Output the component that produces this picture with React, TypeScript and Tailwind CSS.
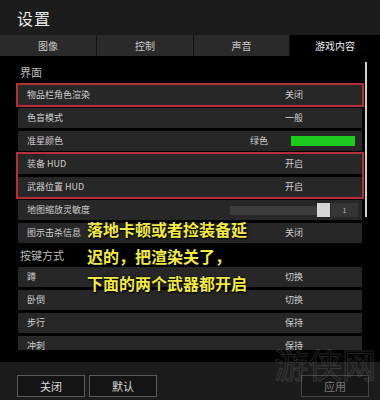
import React from 'react';

const font = { fontFamily: '"Noto Sans CJK SC", "Noto Sans", sans-serif' };

const tabs = ['图像', '控制', '声音', '游戏内容'];

const keyRows = [
  { label: '蹲', value: '切换' },
  { label: '卧倒', value: '切换' },
  { label: '步行', value: '保持' },
  { label: '冲刺', value: '保持' },
];

type RowProps = { label: string; value?: string; children?: React.ReactNode; boxed?: boolean };

const Row: React.FC<RowProps> = ({ label, value, children, boxed }) => (
  <div
    className={`h-[20px] shrink-0 bg-[#272727] flex items-center pl-[9px] text-[9px] text-[#cfcfcf] ${
      boxed ? 'outline-2 outline-[#b3303a]' : ''
    }`}
  >
    {children ? (
      <>
        <span className="flex-1">{label}</span>
        {children}
      </>
    ) : (
      <>
        <span className="w-[258px]">{label}</span>
        <span>{value}</span>
      </>
    )}
  </div>
);

const App: React.FC = () => {
  return (
    <div className="relative w-[380px] h-[400px] bg-black flex flex-col overflow-hidden" style={font}>
      {/* Header */}
      <div className="h-[35px] shrink-0 bg-[#1c1c1c] flex items-center px-[17px]">
        <span className="text-[16px] text-[#e8e8e8] tracking-[1px]">设置</span>
      </div>

      {/* Tabs */}
      <div className="h-[21px] shrink-0 grid grid-cols-[97px_97px_96px_90px]">
        {tabs.map((t, i) => (
          <div
            key={t}
            className={`flex items-center justify-center text-[10px] ${
              i === 3 ? 'bg-black text-[#f0f0f0]' : 'bg-[#2a2a2a] text-[#c8c8c8] border-r border-[#111]'
            }`}
          >
            {t}
          </div>
        ))}
      </div>

      {/* Content */}
      <div className="relative h-[294px] shrink-0 overflow-hidden px-[18px]">
        <div className="absolute left-[365px] top-[6px] w-[2px] h-[155px] bg-[#cfcfcf]" />

        <div className="h-[29px] pt-[9px] text-[11px] text-[#bdbdbd] pl-[2px] leading-[14px]">界面</div>
        <div className="flex flex-col gap-[3px]">
          <Row label="物品栏角色渲染" value="关闭" boxed />
          <Row label="色盲模式" value="一般" />
          <Row label="准星颜色">
            <span className="mr-[23px]">绿色</span>
            <div className="w-[64px] h-[10px] bg-[#1ecb1e] mr-[7px]" />
          </Row>
          <div className="flex flex-col gap-[3px] outline-2 outline-[#b3303a]">
            <Row label="装备 HUD" value="开启" />
            <Row label="武器位置 HUD" value="开启" />
          </div>
          <Row label="地图缩放灵敏度">
            <div className="w-[87px] h-[9px] bg-[#3d3d3d]" />
            <div className="w-[13px] h-[14px] bg-[#d6d6d6]" />
            <div className="w-[27px] h-[14px] bg-[#353535] ml-[1px] mr-[4px] flex items-center justify-center text-[7px] text-[#bbb]">
              1
            </div>
          </Row>
          <Row label="图示击杀信息" value="关闭" />
        </div>

        <div className="h-[24px] pt-[5px] text-[11px] text-[#bdbdbd] pl-[2px] leading-[14px]">按键方式</div>
        <div className="flex flex-col gap-[3px]">
          {keyRows.map((r) => (
            <Row key={r.label} label={r.label} value={r.value} />
          ))}
        </div>
      </div>
      <div className="flex-1 bg-black" />

      {/* Footer */}
      <div className="h-[38px] shrink-0 bg-[#1c1c1c] flex items-start pt-[13px] px-[17px]">
        <button className="w-[68px] h-[22px] bg-[#141414] border border-[#5a5a5a] text-[11px] text-[#dcdcdc]">关闭</button>
        <button className="w-[68px] h-[22px] bg-[#141414] border border-[#5a5a5a] text-[11px] text-[#dcdcdc] ml-[4px]">默认</button>
        <button className="w-[68px] h-[22px] bg-[#161616] border border-[#454545] text-[11px] text-[#7a7a7a] ml-auto mr-[-6px]">应用</button>
      </div>

      {/* Watermark */}
      <div
        className="absolute left-[274px] top-[344px] text-[34px] leading-[40px] text-transparent opacity-25 [-webkit-text-stroke:1px_#8a8a8a]"
        style={{ fontFamily: '"Noto Sans CJK SC", serif' }}
      >
        游侠网
      </div>

      {/* Overlay caption */}
      <div className="absolute left-[87px] top-[216px] text-[16px] leading-[27px] font-bold text-[#f2ea45] [text-shadow:0_0_2px_#000,1px_1px_2px_#000]">
        <div>落地卡顿或者捡装备延</div>
        <div>迟的，把渲染关了，</div>
        <div>下面的两个武器都开启</div>
      </div>
    </div>
  );
};

export default App;
